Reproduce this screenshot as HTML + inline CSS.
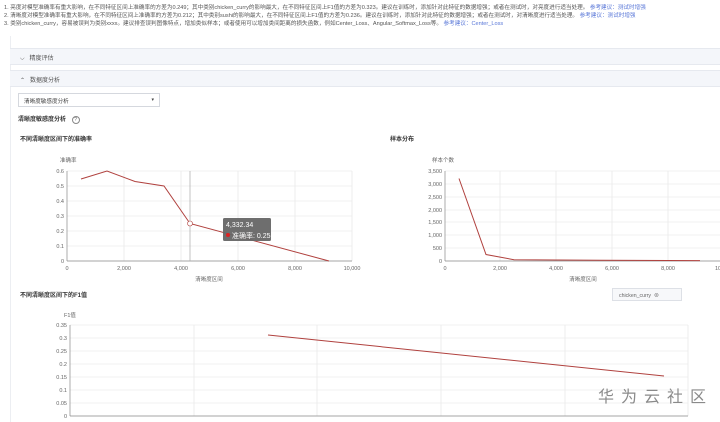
<!DOCTYPE html>
<html><head><meta charset="utf-8"><style>
*{margin:0;padding:0;box-sizing:border-box}
body{width:720px;height:422px;overflow:hidden;background:#fff;font-family:"Liberation Sans","Noto Sans CJK SC",sans-serif;color:#333;position:relative}
.t{position:absolute;white-space:nowrap}
.tl{font-size:5.6px;color:#555;left:4px}
.tl a{color:#5a78d8;text-decoration:none}
.bar{position:absolute;left:10px;width:710px;height:17px;background:#f4f6fa;border-top:1px solid #e6e9ef;border-bottom:1px solid #e6e9ef;font-size:6px;color:#555;padding:4px 0 0 10px}
</style></head><body>
<div class="t tl" style="top:3px">1. 亮度对模型准确率有重大影响，在不同特征区间上准确率的方差为0.249；其中类别chicken_curry的影响最大，在不同特征区间上F1值的方差为0.323。建议在训练时，添加针对此特征的数据增强；或者在测试时，对亮度进行适当处理。 <a>参考建议：测试时增强</a></div>
<div class="t tl" style="top:11px">2. 清晰度对模型准确率有重大影响，在不同特征区间上准确率的方差为0.212；其中类别sushi的影响最大，在不同特征区间上F1值的方差为0.236。建议在训练时，添加针对此特征的数据增强；或者在测试时，对清晰度进行适当处理。 <a>参考建议：测试时增强</a></div>
<div class="t tl" style="top:19px">3. 类别chicken_curry，容易被误判为类别xxxx。建议排查误判图像特点，增加类似样本；或者使用可以增加类间距离的损失函数，例如Center_Loss、Angular_Softmax_Loss等。 <a>参考建议：Center_Loss</a></div>
<div style="position:absolute;left:10px;top:36px;width:1px;height:386px;background:#eceef2"></div>
<div class="bar" style="top:48px">⌵&nbsp;&nbsp;&nbsp;精度评估</div>
<div class="bar" style="top:70px">⌃&nbsp;&nbsp;&nbsp;数据度分析</div>
<div style="position:absolute;left:18px;top:93px;width:142px;height:14px;border:1px solid #d5d8de;font-size:5.6px;color:#444;padding:3px 0 0 5px">清晰度敏感度分析<span style="position:absolute;right:5px;top:3px;font-size:5px">▾</span></div>
<div class="t" style="left:18px;top:114px;font-size:6px;font-weight:bold;color:#333">清晰度敏感度分析 <span style="display:inline-block;width:8px;height:8px;border:1px solid #888;border-radius:50%;font-size:5px;text-align:center;line-height:6px;font-weight:normal;color:#666;margin-left:4px">?</span></div>
<div class="t" style="left:20px;top:134px;font-size:6px;font-weight:bold">不同清晰度区间下的准确率</div>
<div class="t" style="left:390px;top:134px;font-size:6px;font-weight:bold">样本分布</div>
<div class="t" style="left:20px;top:290px;font-size:6px;font-weight:bold">不同清晰度区间下的F1值</div>
<div style="position:absolute;left:612px;top:288px;width:70px;height:13px;border:1px solid #dde0e6;background:#f7f8fa;font-size:5.2px;color:#666;padding:3px 0 0 6px">chicken_curry&nbsp;&nbsp;⊗</div>
<svg width="720" height="422" style="position:absolute;left:0;top:0" font-family="Liberation Sans,Noto Sans CJK SC,sans-serif" font-size="5.5" fill="#666">
<g stroke="#e3e3e3" stroke-width="0.6">
<line x1="67" y1="171" x2="352" y2="171"/><line x1="67" y1="186" x2="352" y2="186"/><line x1="67" y1="201" x2="352" y2="201"/><line x1="67" y1="216" x2="352" y2="216"/><line x1="67" y1="231" x2="352" y2="231"/><line x1="67" y1="246" x2="352" y2="246"/>
<line x1="124" y1="171" x2="124" y2="261"/><line x1="181" y1="171" x2="181" y2="261"/><line x1="238" y1="171" x2="238" y2="261"/><line x1="295" y1="171" x2="295" y2="261"/><line x1="352" y1="171" x2="352" y2="261"/>
<line x1="445" y1="171" x2="720" y2="171"/><line x1="445" y1="184" x2="720" y2="184"/><line x1="445" y1="197" x2="720" y2="197"/><line x1="445" y1="210" x2="720" y2="210"/><line x1="445" y1="222" x2="720" y2="222"/><line x1="445" y1="235" x2="720" y2="235"/><line x1="445" y1="248" x2="720" y2="248"/>
<line x1="500" y1="171" x2="500" y2="261"/><line x1="556" y1="171" x2="556" y2="261"/><line x1="612" y1="171" x2="612" y2="261"/><line x1="668" y1="171" x2="668" y2="261"/>
<line x1="70" y1="325" x2="688" y2="325"/><line x1="70" y1="338" x2="688" y2="338"/><line x1="70" y1="351" x2="688" y2="351"/><line x1="70" y1="364" x2="688" y2="364"/><line x1="70" y1="377" x2="688" y2="377"/><line x1="70" y1="390" x2="688" y2="390"/><line x1="70" y1="403" x2="688" y2="403"/>
<line x1="194" y1="325" x2="194" y2="416"/><line x1="317" y1="325" x2="317" y2="416"/><line x1="441" y1="325" x2="441" y2="416"/><line x1="565" y1="325" x2="565" y2="416"/><line x1="688" y1="325" x2="688" y2="416"/>
</g>
<g stroke="#888" stroke-width="0.7"><line x1="67" y1="171" x2="67" y2="261"/><line x1="67" y1="261" x2="352" y2="261"/><line x1="445" y1="171" x2="445" y2="261"/><line x1="445" y1="261" x2="720" y2="261"/><line x1="70" y1="325" x2="70" y2="416"/><line x1="70" y1="416" x2="688" y2="416"/><line x1="190" y1="171" x2="190" y2="261" stroke="#aaa"/></g>
<polyline fill="none" stroke="#b0413e" stroke-width="1" points="81,179 107,171 135,181.5 164,186 190,223.5 329,261"/>
<circle cx="190" cy="223.5" r="2.5" fill="#fff" stroke="#b0413e" stroke-width="0.6"/>
<polyline fill="none" stroke="#b0413e" stroke-width="1" points="459,178.5 486,254.5 514,259.7 600,260.3 700,260.6"/>
<polyline fill="none" stroke="#b0413e" stroke-width="1" points="268,335 664,376"/>
<rect x="223" y="218" width="48" height="23" rx="1.5" fill="#666" opacity="0.95"/>
<text x="226" y="227" fill="#fff" font-size="7">4,332.34</text>
<circle cx="228" cy="235" r="2" fill="#d22"/>
<text x="232" y="238" fill="#fff" font-size="7">准确率: 0.25</text>
<text x="60" y="162">准确率</text>
<g text-anchor="end"><text x="64" y="173">0.6</text><text x="64" y="188">0.5</text><text x="64" y="203">0.4</text><text x="64" y="218">0.3</text><text x="64" y="233">0.2</text><text x="64" y="248">0.1</text><text x="64" y="263">0</text></g>
<g text-anchor="middle"><text x="67" y="270">0</text><text x="124" y="270">2,000</text><text x="181" y="270">4,000</text><text x="238" y="270">6,000</text><text x="295" y="270">8,000</text><text x="352" y="270">10,000</text><text x="209" y="281">清晰度区间</text></g>
<text x="432" y="162">样本个数</text>
<g text-anchor="end"><text x="442" y="173">3,500</text><text x="442" y="186">3,000</text><text x="442" y="199">2,500</text><text x="442" y="212">2,000</text><text x="442" y="224">1,500</text><text x="442" y="237">1,000</text><text x="442" y="250">500</text><text x="442" y="263">0</text></g>
<g text-anchor="middle"><text x="445" y="270">0</text><text x="500" y="270">2,000</text><text x="556" y="270">4,000</text><text x="612" y="270">6,000</text><text x="668" y="270">8,000</text><text x="718" y="270">10</text><text x="583" y="281">清晰度区间</text></g>
<text x="64" y="317">F1值</text>
<g text-anchor="end"><text x="67" y="327">0.35</text><text x="67" y="340">0.3</text><text x="67" y="353">0.25</text><text x="67" y="366">0.2</text><text x="67" y="379">0.15</text><text x="67" y="392">0.1</text><text x="67" y="405">0.05</text><text x="67" y="418">0</text></g>
<text x="598" y="402" font-size="16" fill="#8a8a8a" letter-spacing="7">华为云社区</text>
</svg>
</body></html>
